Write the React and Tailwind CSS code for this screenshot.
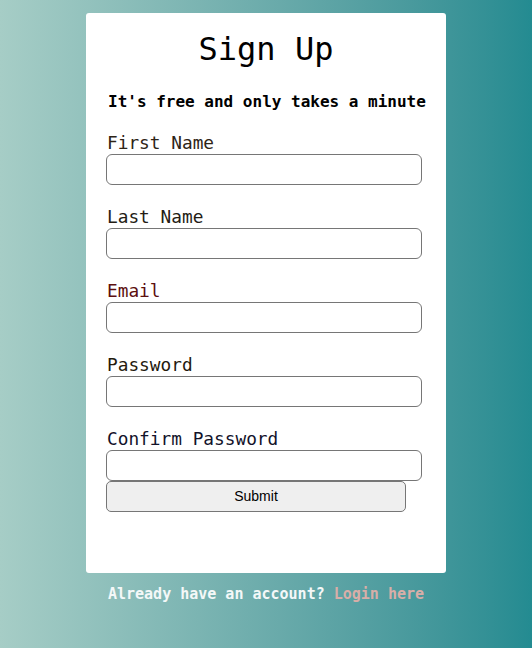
export default function App() {
  const fields = [
    { label: "First Name", color: "text-[#2e2416]", type: "text" },
    { label: "Last Name", color: "text-[#241c14]", type: "text" },
    { label: "Email", color: "text-[#5c0f0f]", type: "email" },
    { label: "Password", color: "text-[#241a0e]", type: "password" },
    { label: "Confirm Password", color: "text-[#12122a]", type: "password" },
  ];
  return (
    <div
      className="min-h-[648px] w-full bg-gradient-to-r from-[#a6cdc6] to-[#238b91] flex flex-col items-center font-['DejaVu_Sans_Mono',monospace]"
    >
      <div className="mt-[13px] w-[360px] h-[560px] bg-white rounded-[3px] pl-[20px] flex flex-col">
        <h1 className="text-center text-[32px] leading-[38px] mt-[17px] pr-[20px] text-black font-normal">
          Sign Up
        </h1>
        <p className="text-[16px] font-bold leading-[20px] mt-[24px] ml-[2px] text-black whitespace-nowrap">
          It's free and only takes a minute
        </p>
        <div className="mt-[20px] flex flex-col">
          {fields.map((f, i) => (
            <div key={f.label} className={"flex flex-col " + (i > 0 ? "mt-[21px]" : "")}>
              <label className={"text-[17.8px] leading-[22px] ml-[1px] " + f.color}>{f.label}</label>
              <input
                type={f.type}
                className="w-[316px] h-[31px] border border-[#767676] rounded-[6px] bg-white outline-none"
              />
            </div>
          ))}
          <button
            className="w-[300px] h-[31px] border border-[#767676] rounded-[5px] bg-[#efefef] text-[14px] text-black font-['Liberation_Sans',Arial,sans-serif]"
          >
            Submit
          </button>
        </div>
      </div>
      <p className="mt-[11px] text-[15px] font-bold leading-[20px] text-[#f4f8f8] whitespace-nowrap">
        Already have an account? <span className="text-[#d8aea8]">Login here</span>
      </p>
    </div>
  );
}
